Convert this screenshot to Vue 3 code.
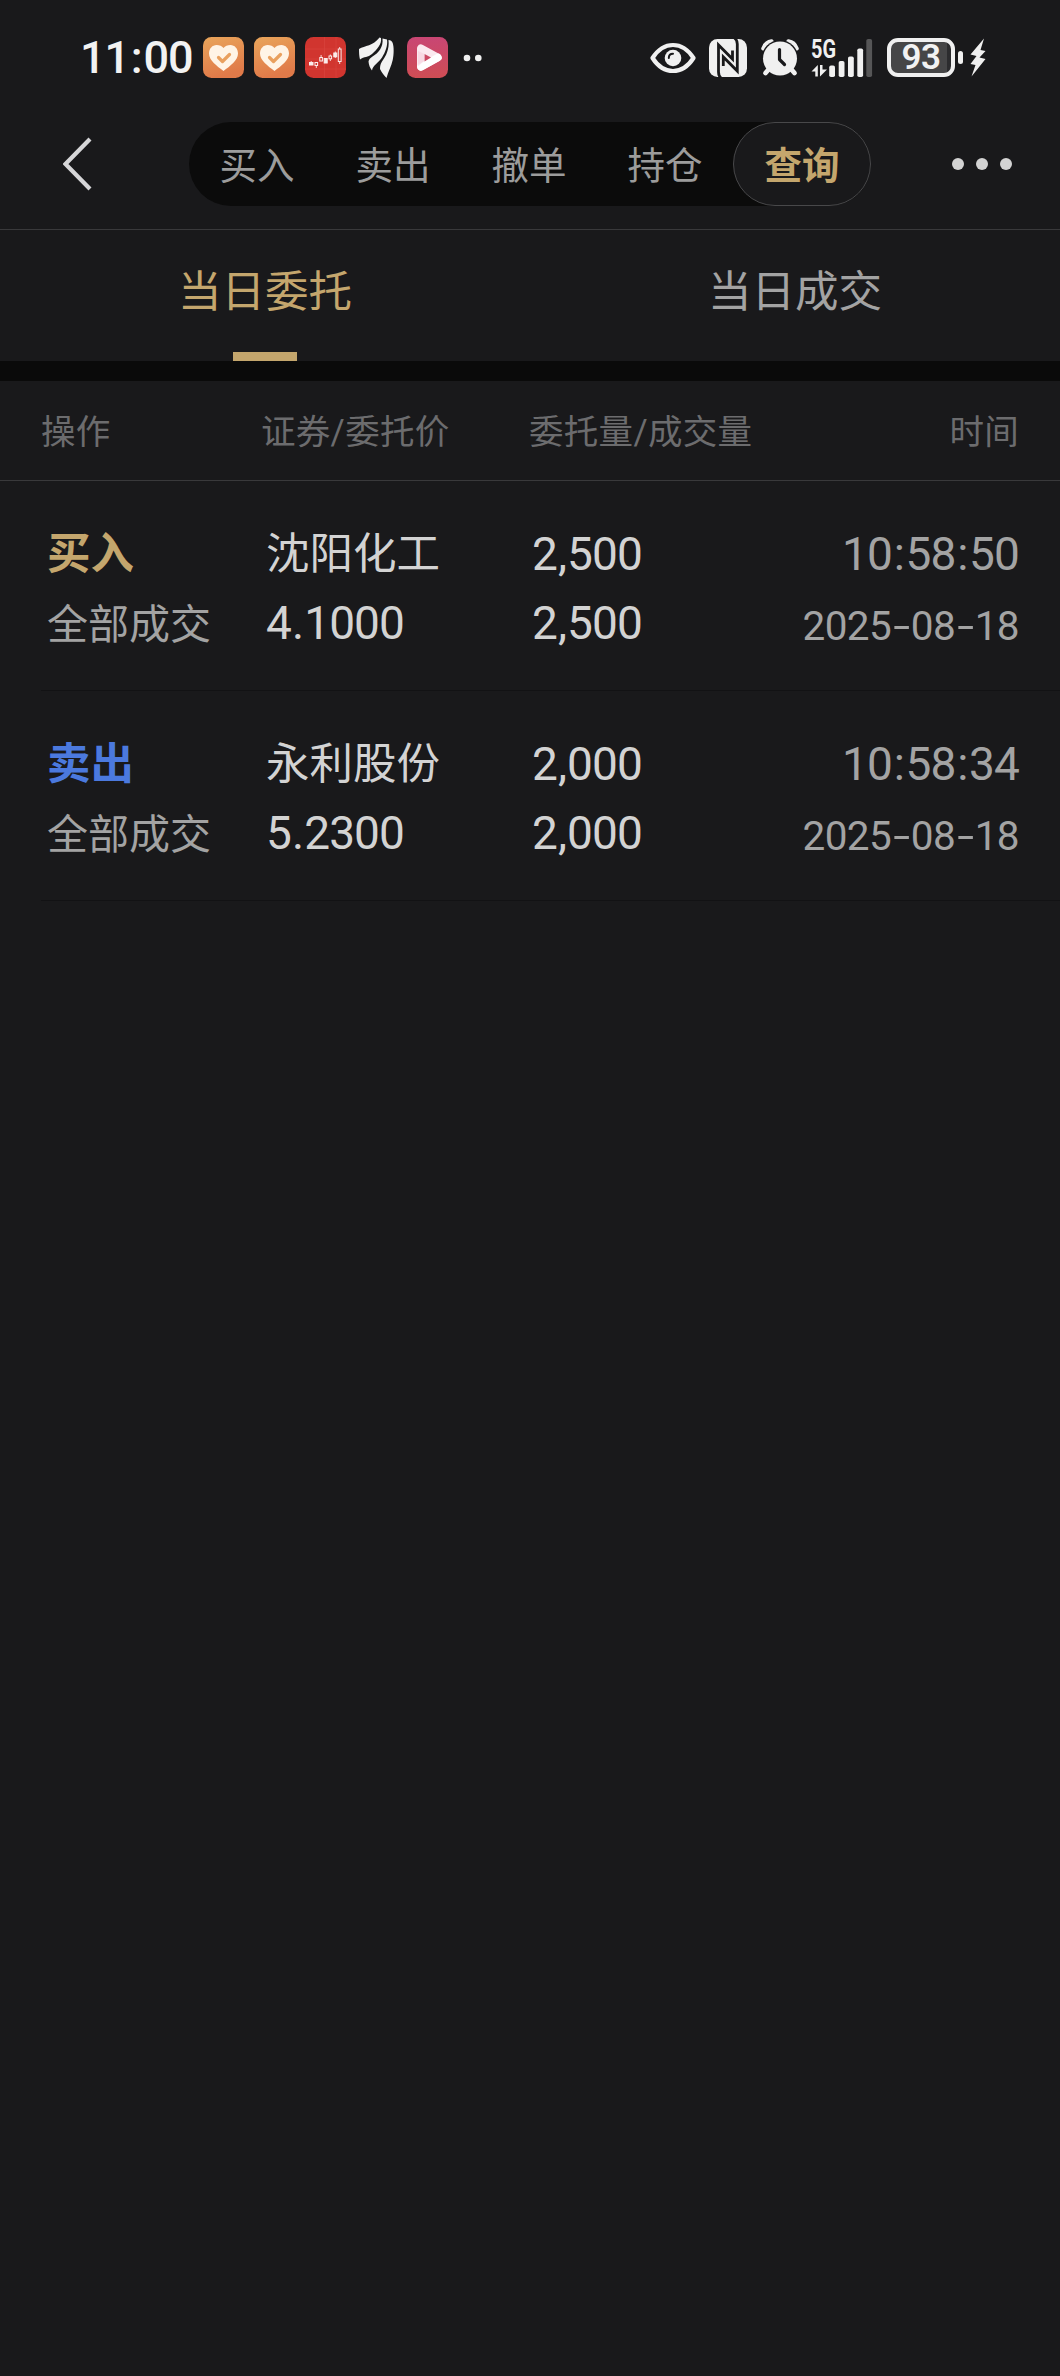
<template>
  <div class="page">
    <header class="status-bar">
      <div class="status-left">
        <span class="clock"><i v-for="(part, i) in split('11:00')" :key="i" :class="part.type">{{ part.text }}</i></span>
        <svg v-for="n in 2" :key="n" class="app-icon" viewBox="0 0 41 41">
          <defs>
            <linearGradient :id="`orange${n}`" x1="0" y1="0" x2="0.3" y2="1">
              <stop offset="0" stop-color="#e9a55b" />
              <stop offset="1" stop-color="#e07a49" />
            </linearGradient>
          </defs>
          <rect width="41" height="41" rx="8.5" :fill="`url(#orange${n})`" />
          <path d="M20.5 34C14 29 6 23.5 6 16.5C6 11.5 9.5 8 13.5 8C16.5 8 19 9 20.5 11C22 9 24.5 8 27.5 8C31.5 8 35 11.5 35 16.5C35 23.5 27 29 20.5 34Z" fill="#fff4e6" />
          <path d="M15.5 20.5L19.5 24.500L26.5 17.5" fill="none" stroke="#e9a05e" stroke-width="3.2" stroke-linecap="round" stroke-linejoin="round" />
        </svg>
        <svg class="app-icon" viewBox="0 0 41 41">
          <rect width="41" height="41" rx="8.5" fill="#d1352f" />
          <path d="M0 12H41M0 22H41M0 32H41M19.5 0V41M31 0V41" stroke="#d8443d" stroke-width="0.7" />
          <g stroke="#fbeceb" stroke-width="1">
            <rect x="4.5" y="25.5" width="3.5" height="2.5" fill="#fbeceb" />
            <rect x="10" y="25.5" width="2.6" height="3" fill="none" />
            <rect x="14.8" y="20.500" width="2.6" height="3.5" fill="none" />
            <rect x="19.2" y="21.500" width="3" height="4.5" fill="#fbeceb" />
            <rect x="24" y="19" width="2.600" height="2.800" fill="none" />
            <rect x="28.800" y="16" width="3" height="3.800" fill="#fbeceb" />
            <rect x="33.300" y="12" width="2.800" height="12.500" fill="none" />
            <path d="M6.200 24V25.500M11.300 28.500V31M16.100 18V20.500M25.300 17.500V19M25.300 22V24M30.300 14.500V21M34.700 10V12M34.700 24.500V27" stroke-width="0.900" />
          </g>
        </svg>
        <svg class="app-icon" viewBox="0 0 41 41" fill="#f2f2f2">
          <path d="M23.500 0.500C17 9 9 8.500 3 12C3 16 3.200 19 4 22.500C8 19.500 12 20.500 16 17C21 12.500 26 7 25 1Z" />
          <path d="M26.500 1.500C27.500 10 22.500 16 16.500 19.500C14 21 13 22.500 12.500 24.500C12.800 28 14 31 16 33.500C17 28 22 26.500 26 20.500C29.500 15 32 8 31 2.500Z" />
          <path d="M32.500 3C33.500 12 30 19 26 24.500C24.500 27 24 29 24 32C26 36 28 38.500 30.500 41C32 35 35.500 29 36.700 23C38 17 38 10 36.700 6C36 4 34.500 3 32.500 3Z" />
        </svg>
        <svg class="app-icon" viewBox="0 0 41 41">
          <defs>
            <linearGradient id="pink" x1="0" y1="0" x2="0" y2="1">
              <stop offset="0" stop-color="#c94674" />
              <stop offset="1" stop-color="#cf4d54" />
            </linearGradient>
          </defs>
          <rect width="41" height="41" rx="8.500" fill="url(#pink)" />
          <path d="M14 11.500V29.500L30.500 20.500Z" fill="none" stroke="#fbe9ef" stroke-width="8" stroke-linejoin="round" />
          <path d="M14 30L31 20.500" stroke="#fff" stroke-width="7.500" stroke-linecap="round" />
          <path d="M17.500 17V24.500L24 20.500Z" fill="#cb4963" />
          <path d="M11 14L17.500 17V24L11 29Z" fill="#f5cad7" opacity="0.500" />
        </svg>
        <svg class="more-apps" viewBox="0 0 19 8" fill="#f0f0f0">
          <circle cx="4" cy="4" r="3.300" />
          <circle cx="15.300" cy="4" r="3.300" />
        </svg>
      </div>
      <div class="status-right">
        <svg class="eye" viewBox="0 0 46 32">
          <path d="M2.500 16C8 7.500 15 3 23 3S38 7.500 43.500 16C38 24.500 31 29 23 29S8 24.500 2.500 16Z" fill="none" stroke="#f0f0f0" stroke-width="4.200" stroke-linejoin="round" />
          <circle cx="23" cy="16" r="8.300" fill="#f0f0f0" />
          <path d="M18.800 16C18.800 13.300 20.500 11.800 23 11.800" fill="none" stroke="#19191b" stroke-width="2" stroke-linecap="round" />
        </svg>
        <svg class="nfc" viewBox="0 0 38 38">
          <rect width="38" height="38" rx="8.500" fill="#f0f0f0" />
          <path d="M12 39C10.200 37.500 9.500 36 9.500 33V6L23.500 20V11.500" fill="none" stroke="#19191b" stroke-width="2.800" />
          <path d="M25.500 -1C27.500 0.500 28.300 2 28.300 5V32L14.300 18V27" fill="none" stroke="#19191b" stroke-width="2.800" />
        </svg>
        <svg class="alarm" viewBox="0 0 38 38">
          <path d="M2.500 9.500C4 5.500 7 3 10.500 2.500M35.500 9.500C34 5.500 31 3 27.500 2.500" fill="none" stroke="#f0f0f0" stroke-width="4.500" stroke-linecap="round" />
          <circle cx="19" cy="19.500" r="18.500" fill="#19191b" class="alarm-gap" />
          <circle cx="19" cy="19.500" r="17" fill="#f0f0f0" />
          <path d="M8 30L4.500 34M30 30L33.500 34" stroke="#f0f0f0" stroke-width="4.800" stroke-linecap="round" />
          <path d="M18.500 10.500V20.500L23.500 25.500" fill="none" stroke="#19191b" stroke-width="3.200" stroke-linecap="round" stroke-linejoin="round" />
        </svg>
        <svg class="signal" viewBox="0 -8 62 54">
          <text x="0" y="18.500" class="signal-text" textLength="25" lengthAdjust="spacingAndGlyphs">5G</text>
          <path d="M0.500 32.500L6.800 26V37.500H4.300V32.500Z" fill="#f0f0f0" />
          <path d="M9 26H11.500V30.500H16L9 37.500Z" fill="#f0f0f0" />
          <g fill="#f0f0f0">
            <rect x="18.200" y="26.500" width="5.800" height="11.500" rx="1.800" />
            <rect x="27.700" y="22" width="5.800" height="16" rx="1.800" />
            <rect x="37" y="17.500" width="5.800" height="20.500" rx="1.800" />
            <rect x="46.300" y="9.500" width="5.800" height="28.500" rx="1.800" />
            <rect x="55.300" y="0" width="5.800" height="38" rx="1.800" fill="#565657" />
          </g>
        </svg>
        <div class="battery">
          <div class="battery-body"><span class="battery-level">{{ battery }}</span></div>
          <i class="battery-tip"></i>
        </div>
        <svg class="bolt" viewBox="0 0 16 39" fill="#f0f0f0">
          <path d="M14 0.500L0.500 16.500L6.500 18L0.500 26L5.500 27L1.500 38.500L15.500 21L9.500 19.500L15.500 13L10.500 12Z" />
        </svg>
      </div>
    </header>

    <nav class="nav-bar">
      <button type="button" class="icon-btn back" aria-label="返回">
        <svg viewBox="0 0 30 54" fill="none" stroke="#d6d6d8" stroke-width="4.200">
          <path d="M27 2L2.500 27L27 52" />
        </svg>
      </button>
      <div class="segment">
        <button
          v-for="item in navItems"
          :key="item"
          type="button"
          class="segment-item"
          :class="{ active: item === activeNav }"
          @click="activeNav = item"
        >
          {{ item }}
        </button>
      </div>
      <button type="button" class="icon-btn more" aria-label="更多">
        <i></i><i></i><i></i>
      </button>
    </nav>

    <div class="tabs">
      <button
        v-for="tab in tabs"
        :key="tab"
        type="button"
        class="tab"
        :class="{ active: tab === activeTab }"
        @click="activeTab = tab"
      >
        {{ tab }}
      </button>
    </div>

    <div class="table-head">
      <span>操作</span>
      <span>证券/委托价</span>
      <span>委托量/成交量</span>
      <span class="right">时间</span>
    </div>

    <div class="orders">
      <div v-for="order in orders" :key="order.time" class="order">
        <div class="cell">
          <span class="side" :class="order.side">{{ order.side === 'buy' ? '买入' : '卖出' }}</span>
          <span class="state">{{ order.state }}</span>
        </div>
        <div class="cell">
          <span class="name">{{ order.name }}</span>
          <span class="num"><i v-for="(part, i) in split(order.price)" :key="i" :class="part.type">{{ part.text }}</i></span>
        </div>
        <div class="cell">
          <span class="num"><i v-for="(part, i) in split(order.amount)" :key="i" :class="part.type">{{ part.text }}</i></span>
          <span class="num"><i v-for="(part, i) in split(order.filled)" :key="i" :class="part.type">{{ part.text }}</i></span>
        </div>
        <div class="cell right">
          <span class="num time"><i v-for="(part, i) in split(order.time)" :key="i" :class="part.type">{{ part.text }}</i></span>
          <span class="date"><i v-for="(part, i) in split(order.date)" :key="i" :class="part.type">{{ part.text }}</i></span>
        </div>
      </div>
    </div>
  </div>
</template>

<script setup>
import { ref } from 'vue';

const battery = ref(93);

const navItems = ['买入', '卖出', '撤单', '持仓', '查询'];
const activeNav = ref('查询');

const tabs = ['当日委托', '当日成交'];
const activeTab = ref('当日委托');

const orders = ref([
  {
    side: 'buy',
    state: '全部成交',
    name: '沈阳化工',
    price: '4.1000',
    amount: '2,500',
    filled: '2,500',
    time: '10:58:50',
    date: '2025-08-18'
  },
  {
    side: 'sell',
    state: '全部成交',
    name: '永利股份',
    price: '5.2300',
    amount: '2,000',
    filled: '2,000',
    time: '10:58:34',
    date: '2025-08-18'
  }
]);

const types = { ':': 'colon', ',': 'point', '.': 'point', '-': 'dash' };

// separators get a little more room than the digits
const split = (value) => value.split(/([:,.-])/).map((text) => ({ text, type: types[text] || 'digits' }));
</script>

<style>
body {
  background: #19191b;
}
</style>

<style scoped>
.page {
  box-sizing: border-box;
  width: 1060px;
  min-height: 2376px;
  background: #19191b;
  color: #d3d3d3;
  font-family: Roboto, 'Noto Sans CJK SC', sans-serif;
}

.page * {
  box-sizing: border-box;
}

button {
  padding: 0;
  border: none;
  background: transparent;
  font-family: inherit;
  color: inherit;
  cursor: pointer;
}

i {
  font-style: normal;
}

svg {
  display: block;
  flex-shrink: 0;
}

.colon {
  margin: 0 1.7px;
}

.point {
  margin: 0 1px;
}

.dash {
  display: inline-block;
  margin: 0 4.5px;
  transform: scaleX(1.5);
}

/* status bar */
.status-bar {
  display: flex;
  justify-content: space-between;
  height: 115px;
  padding: 0 74px 0 80px;
}

.status-left,
.status-right {
  display: flex;
  align-items: center;
  height: 115px;
}

.status-left {
  gap: 10px;
}

.clock {
  width: 113px;
  font-size: 45px;
  font-weight: 500;
  line-height: 60px;
  letter-spacing: -1px;
  color: #f2f2f2;
  white-space: nowrap;
}

.app-icon {
  width: 41px;
  height: 41px;
}

.more-apps {
  width: 19px;
  height: 8px;
  margin-left: 5px;
}

.eye {
  width: 46px;
  height: 32px;
  margin-right: 13px;
}

.nfc {
  width: 38px;
  height: 38px;
  margin-right: 14px;
}

.alarm {
  width: 38px;
  height: 38px;
  margin-right: 12px;
}

.alarm-gap {
  clip-path: inset(0 0 12px 0);
}

.signal {
  width: 62px;
  height: 54px;
  margin-right: 14px;
}

.signal-text {
  font-size: 25px;
  font-weight: 700;
  fill: #f0f0f0;
}

.battery {
  display: flex;
  align-items: center;
  gap: 3px;
  margin-right: 7px;
}

.battery-body {
  display: flex;
  align-items: center;
  justify-content: center;
  width: 68px;
  height: 39px;
  border: 4px solid #f0f0f0;
  border-radius: 11px;
  background: linear-gradient(90deg, #464647 93%, #2c2c2e 93%);
}

.battery-level {
  font-size: 35px;
  font-weight: 600;
  line-height: 31px;
  letter-spacing: -0.5px;
  color: #f2f2f2;
}

.battery-tip {
  width: 5px;
  height: 13px;
  border-radius: 3px;
  background: #f0f0f0;
}

.bolt {
  width: 16px;
  height: 39px;
}

/* top navigation */
.nav-bar {
  display: flex;
  align-items: center;
  height: 115px;
  padding: 0 48px 16px 63px;
  border-bottom: 1px solid #39393b;
}

.back svg {
  width: 30px;
  height: 54px;
}

.segment {
  display: flex;
  width: 682px;
  height: 84px;
  margin-left: 96px;
  border-radius: 42px;
  background: #0b0b0b;
}

.segment-item {
  flex: 1;
  padding-top: 4px;
  font-size: 37.5px;
  line-height: 78px;
  color: #9c9c9c;
  white-space: nowrap;
}

.segment-item.active {
  border: 1px solid #48484a;
  border-radius: 42px;
  background: #19191b;
  font-weight: 700;
  color: #c4a66d;
}

.more {
  display: flex;
  gap: 12px;
  margin-left: auto;
}

.more i {
  width: 12px;
  height: 12px;
  border-radius: 50%;
  background: #d3d3d3;
}

/* tabs */
.tabs {
  display: flex;
  height: 151px;
  border-bottom: 20px solid #0a0a0a;
}

.tab {
  display: flex;
  flex: 1;
  flex-direction: column;
  align-items: center;
  justify-content: space-between;
  padding-top: 31px;
  font-size: 43.5px;
  line-height: 64px;
  color: #a3a3a3;
}

.tab.active {
  color: #c4a66d;
}

.tab.active::after {
  content: '';
  width: 64px;
  height: 9px;
  background: #c4a66d;
}

/* order table */
.table-head {
  display: grid;
  grid-template-columns: 220px 268px 270px 1fr;
  align-items: center;
  height: 100px;
  padding: 0 41px 3px;
  border-bottom: 1px solid #39393b;
  font-size: 34.5px;
  letter-spacing: 0.3px;
  color: #6c6c6e;
}

.right {
  text-align: right;
}

.orders {
  padding-left: 41px;
}

.order {
  display: grid;
  grid-template-columns: 219px 266px 200px 1fr;
  height: 210px;
  padding: 39px 41px 0 6px;
  border-bottom: 1px solid #121214;
}

.cell {
  display: flex;
  flex-direction: column;
}

.cell span {
  height: 70px;
  line-height: 70px;
  white-space: nowrap;
}

.side {
  font-size: 43.5px;
  font-weight: 700;
}

.side.buy {
  color: #c4a66d;
}

.side.sell {
  color: #4b79de;
}

.state {
  font-size: 41px;
  color: #a3a3a3;
}

.name {
  font-size: 43.5px;
}

.cell .num {
  height: 69px;
  font-size: 46px;
  line-height: 68px;
  letter-spacing: -0.9px;
}

.cell .name + .num {
  line-height: 66px;
}

.cell .time {
  color: #a3a3a3;
}

.date {
  padding-top: 2px;
  font-size: 40.5px;
  letter-spacing: -0.6px;
  color: #a3a3a3;
}
</style>
